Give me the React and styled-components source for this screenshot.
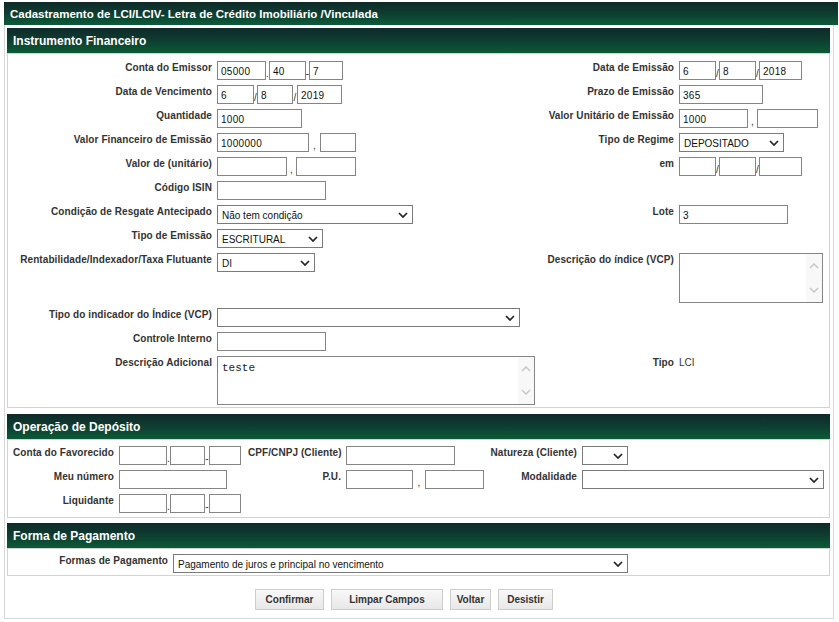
import React from "react";
import styled, { createGlobalStyle } from "styled-components";

const GlobalStyle = createGlobalStyle`
  body {
    margin: 0;
    background: #fff;
    font-family: "Liberation Sans", Arial, sans-serif;
  }
`;

const Page = styled.div`
  padding: 2px 1px 2px 4px;
  width: 839px;
  box-sizing: border-box;
`;

const TitleBar = styled.div`
  height: 23px;
  width: 834px;
  box-sizing: border-box;
  padding-left: 6px;
  display: flex;
  align-items: center;
  background: linear-gradient(to bottom, #0f2a29 0%, #0e3d31 50%, #0b5b37 100%);
  color: #fff;
  font-weight: bold;
  font-size: 11.5px;
`;

const Frame = styled.div`
  width: 830px;
  box-sizing: border-box;
  border: 1px solid #d8d8d8;
  border-top: none;
  padding: 3px 3px 8px 2px;
`;

const SectionHeader = styled.div`
  height: 25px;
  margin-top: ${(p) => p.$top || 0}px;
  box-sizing: border-box;
  padding-left: 6px;
  display: flex;
  align-items: center;
  background: linear-gradient(to bottom, #0f2a29 0%, #0e3d31 50%, #0b5b37 100%);
  color: #fff;
  font-weight: bold;
  font-size: 12px;
`;

const Box = styled.div`
  border: 1px solid #d3d3d3;
  padding: ${(p) => p.$pad};
`;

const MainGrid = styled.div`
  display: grid;
  grid-template-columns: 204px 320px 132px 1fr;
  column-gap: 5px;
  row-gap: 5px;
  align-items: start;
`;

const DepositGrid = styled.div`
  display: grid;
  grid-template-columns: 106px 124px 93px 138px 88px 1fr;
  column-gap: 5px;
  row-gap: 5px;
  align-items: start;
`;

const PayRow = styled.div`
  display: flex;
  align-items: flex-start;
  gap: 5px;
`;

const Label = styled.div`
  width: ${(p) => (p.$w ? `${p.$w}px` : "auto")};
  font-weight: bold;
  font-size: 10px;
  letter-spacing: 0.08px;
  line-height: 12px;
  padding-top: 1px;
  color: #333;
  text-align: right;
  white-space: nowrap;
`;

const Value = styled.div`
  font-size: 10px;
  line-height: 12px;
  padding-top: 1px;
  color: #333;
`;

const Group = styled.div`
  display: flex;
  align-items: flex-start;
`;

const Input = styled.input`
  width: ${(p) => p.$w}px;
  height: 19px;
  box-sizing: border-box;
  border: 1px solid #858585;
  border-radius: 0;
  padding: 1px 3px 0;
  margin: 0;
  font-family: "Liberation Sans", Arial, sans-serif;
  font-size: 10px;
  letter-spacing: 0.3px;
  color: #111;
  background: #fff;
  outline: none;
`;

const Sep = styled.span`
  width: ${(p) => p.$w}px;
  height: 19px;
  box-sizing: border-box;
  display: flex;
  align-items: flex-end;
  justify-content: center;
  padding-bottom: 1px;
  font-size: 10px;
  line-height: 10px;
  color: #333;
`;

const SelectBox = styled.div`
  width: ${(p) => p.$w}px;
  height: 19px;
  box-sizing: border-box;
  border: 1px solid #7a7a7a;
  background: #fff;
  display: flex;
  align-items: center;
  justify-content: space-between;
  padding: 1px 4px 0 4px;
  font-size: 10px;
  color: #111;
  white-space: nowrap;
`;

const AreaBox = styled.div`
  width: ${(p) => p.$w}px;
  height: ${(p) => p.$h}px;
  box-sizing: border-box;
  border: 1px solid #858585;
  background: #fff;
  display: flex;
`;

const TextArea = styled.textarea`
  flex: 1;
  border: none;
  resize: none;
  outline: none;
  overflow: hidden;
  margin: 0;
  padding: 5px 4px;
  font-family: "Liberation Mono", "Courier New", monospace;
  font-size: 11px;
  color: #222;
  background: transparent;
`;

const ScrollTrack = styled.div`
  width: 16px;
  background: #f8f8f8;
  display: flex;
  flex-direction: column;
  align-items: center;
  justify-content: space-between;
  padding: 9px 0 9px;
`;

const ButtonRow = styled.div`
  display: flex;
  gap: 7px;
  margin-top: 13px;
  padding-left: 248px;
`;

const Button = styled.button`
  width: ${(p) => p.$w}px;
  height: 21px;
  padding: 0;
  border: 1px solid #cdcdcd;
  border-radius: 0;
  background: linear-gradient(to bottom, #f8f8f8, #e8e8e8);
  font-family: "Liberation Sans", Arial, sans-serif;
  font-weight: bold;
  font-size: 10px;
  color: #333;
`;

const Chevron = ({ color = "#222", up = false, w = 10, h = 6, sw = 1.7 }) => (
  <svg width={w} height={h} viewBox="0 0 10 6">
    <polyline
      points={up ? "1,5 5,1 9,5" : "1,1 5,5 9,1"}
      fill="none"
      stroke={color}
      strokeWidth={sw}
    />
  </svg>
);

const Select = ({ w, text }) => (
  <SelectBox $w={w}>
    <span>{text}</span>
    <Chevron />
  </SelectBox>
);

const Area = ({ w, h, text }) => (
  <AreaBox $w={w} $h={h}>
    <TextArea defaultValue={text} />
    <ScrollTrack>
      <Chevron up color="#c4c4c4" sw={1.3} />
      <Chevron color="#c4c4c4" sw={1.3} />
    </ScrollTrack>
  </AreaBox>
);

const Empty = () => <span />;

export default function App() {
  return (
    <Page>
      <GlobalStyle />
      <TitleBar>Cadastramento de LCI/LCIV- Letra de Crédito Imobiliário /Vinculada</TitleBar>
      <Frame>
        <SectionHeader>Instrumento Financeiro</SectionHeader>
        <Box $pad="7px 0 2px">
          <MainGrid>
            <Label>Conta do Emissor</Label>
            <Group>
              <Input $w={49} defaultValue="05000" />
              <Sep $w={3}>.</Sep>
              <Input $w={37} defaultValue="40" />
              <Sep $w={3}>-</Sep>
              <Input $w={34} defaultValue="7" />
            </Group>
            <Label>Data de Emissão</Label>
            <Group>
              <Input $w={37} defaultValue="6" />
              <Sep $w={3}>/</Sep>
              <Input $w={37} defaultValue="8" />
              <Sep $w={3}>/</Sep>
              <Input $w={43} defaultValue="2018" />
            </Group>

            <Label>Data de Vencimento</Label>
            <Group>
              <Input $w={37} defaultValue="6" />
              <Sep $w={3}>/</Sep>
              <Input $w={36} defaultValue="8" />
              <Sep $w={4}>/</Sep>
              <Input $w={45} defaultValue="2019" />
            </Group>
            <Label>Prazo de Emissão</Label>
            <Input $w={84} defaultValue="365" />

            <Label>Quantidade</Label>
            <Input $w={85} defaultValue="1000" />
            <Label>Valor Unitário de Emissão</Label>
            <Group>
              <Input $w={69} defaultValue="1000" />
              <Sep $w={9}>,</Sep>
              <Input $w={61} />
            </Group>

            <Label>Valor Financeiro de Emissão</Label>
            <Group>
              <Input $w={92} defaultValue="1000000" />
              <Sep $w={11}>,</Sep>
              <Input $w={36} />
            </Group>
            <Label>Tipo de Regime</Label>
            <Select w={105} text="DEPOSITADO" />

            <Label>Valor de (unitário)</Label>
            <Group>
              <Input $w={70} />
              <Sep $w={9}>,</Sep>
              <Input $w={60} />
            </Group>
            <Label>em</Label>
            <Group>
              <Input $w={37} />
              <Sep $w={3}>/</Sep>
              <Input $w={37} />
              <Sep $w={3}>/</Sep>
              <Input $w={43} />
            </Group>

            <Label>Código ISIN</Label>
            <Input $w={109} />
            <Empty />
            <Empty />

            <Label>Condição de Resgate Antecipado</Label>
            <Select w={196} text="Não tem condição" />
            <Label>Lote</Label>
            <Input $w={109} defaultValue="3" />

            <Label>Tipo de Emissão</Label>
            <Select w={106} text="ESCRITURAL" />
            <Empty />
            <Empty />

            <Label>Rentabilidade/Indexador/Taxa Flutuante</Label>
            <Select w={98} text="DI" />
            <Label>Descrição do índice (VCP)</Label>
            <Area w={144} h={50} />

            <Label>Tipo do indicador do Índice (VCP)</Label>
            <Select w={303} text="" />
            <Empty />
            <Empty />

            <Label>Controle Interno</Label>
            <Input $w={109} />
            <Empty />
            <Empty />

            <Label>Descrição Adicional</Label>
            <Area w={318} h={49} text="teste" />
            <Label>Tipo</Label>
            <Value>LCI</Value>
          </MainGrid>
        </Box>

        <SectionHeader $top={6}>Operação de Depósito</SectionHeader>
        <Box $pad="6px 0 4px">
          <DepositGrid>
            <Label>Conta do Favorecido</Label>
            <Group>
              <Input $w={48} />
              <Sep $w={3}>.</Sep>
              <Input $w={35} />
              <Sep $w={4}>-</Sep>
              <Input $w={32} />
            </Group>
            <Label>CPF/CNPJ (Cliente)</Label>
            <Input $w={109} />
            <Label>Natureza (Cliente)</Label>
            <Select w={46} text="" />

            <Label>Meu número</Label>
            <Input $w={108} />
            <Label>P.U.</Label>
            <Group>
              <Input $w={67} />
              <Sep $w={12}>,</Sep>
              <Input $w={59} />
            </Group>
            <Label>Modalidade</Label>
            <Select w={242} text="" />

            <Label>Liquidante</Label>
            <Group>
              <Input $w={48} />
              <Sep $w={3}>.</Sep>
              <Input $w={35} />
              <Sep $w={4}>-</Sep>
              <Input $w={32} />
            </Group>
          </DepositGrid>
        </Box>

        <SectionHeader $top={5}>Forma de Pagamento</SectionHeader>
        <Box $pad="5px 0 2px">
          <PayRow>
            <Label $w={160}>Formas de Pagamento</Label>
            <Select w={455} text="Pagamento de juros e principal no vencimento" />
          </PayRow>
        </Box>

        <ButtonRow>
          <Button $w={69}>Confirmar</Button>
          <Button $w={112}>Limpar Campos</Button>
          <Button $w={41}>Voltar</Button>
          <Button $w={55}>Desistir</Button>
        </ButtonRow>
      </Frame>
    </Page>
  );
}
